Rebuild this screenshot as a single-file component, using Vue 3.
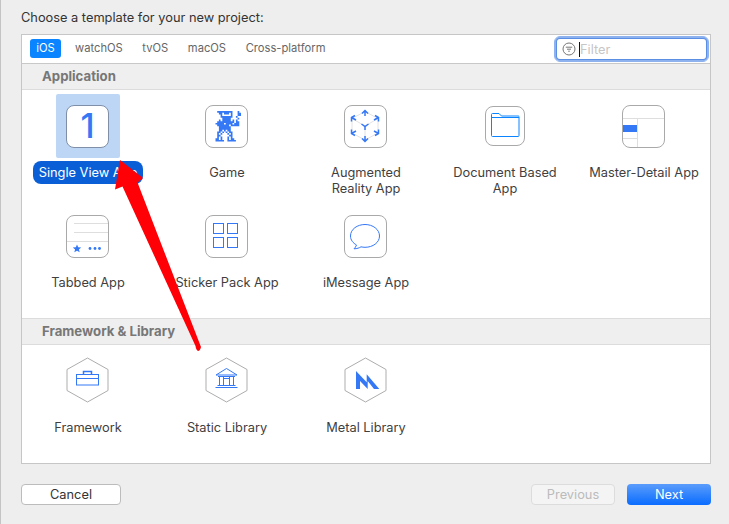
<script setup>
const tabs = ['watchOS', 'tvOS', 'macOS', 'Cross-platform']

const appItems = [
  { id: 'single', label: 'Single View App', selected: true },
  { id: 'game', label: 'Game' },
  { id: 'ar', label: 'Augmented\nReality App' },
  { id: 'doc', label: 'Document Based\nApp' },
  { id: 'master', label: 'Master-Detail App' },
  { id: 'tabbed', label: 'Tabbed App' },
  { id: 'sticker', label: 'Sticker Pack App' },
  { id: 'message', label: 'iMessage App' }
]

const libItems = [
  { id: 'framework', label: 'Framework' },
  { id: 'static', label: 'Static Library' },
  { id: 'metal', label: 'Metal Library' }
]

const sections = [
  { title: 'Application', items: appItems, cls: 'app' },
  { title: 'Framework & Library', items: libItems, cls: 'lib' }
]

const sprite = [
  '.#########...#..',
  '..##.###.#...##.',
  '...#.....#...##.',
  '...#######..#...',
  '....#####....#..',
  '..#.#####.#.#...',
  '.##########.##..',
  '#####.####.###..',
  '.#######.#####..',
  '..#######.......',
  '..#######.......',
  '..##.#.##.......',
  '.##.#.#.##......',
  '.#.#...#.#......',
  '.##.....##......',
  '.#.#...#.#......',
  '##.#...#.##.....',
  '#####..#####....'
]

const spritePath = sprite
  .map((row, y) =>
    [...row].map((c, x) => (c === '#' ? `M${x} ${y}h1v1h-1z` : '')).join('')
  )
  .join('')
</script>

<template>
  <div class="window">
    <p class="title">Choose a template for your new project:</p>

    <div class="panel">
      <div class="toolbar">
        <span class="tab active">iOS</span>
        <span v-for="t in tabs" :key="t" class="tab">{{ t }}</span>
        <div class="filter">
          <svg class="filter-icon" width="14" height="14" viewBox="0 0 14 14">
            <circle cx="7" cy="7" r="6" fill="none" stroke="#777" stroke-width="1" />
            <path d="M3.8 5.2h6.4M5 7.2h4M6.2 9.2h1.6" stroke="#777" stroke-width="1" fill="none" />
          </svg>
          <span class="caret"></span>
          <span class="placeholder">Filter</span>
        </div>
      </div>

      <section v-for="s in sections" :key="s.title" :class="['section', s.cls]">
        <h3 class="section-head">{{ s.title }}</h3>
        <div class="grid">
          <div v-for="item in s.items" :key="item.id" :class="['item', { selected: item.selected }]">
            <div class="icon-zone">
              <div v-if="item.id === 'single'" class="tile tile-sel"><span class="one">1</span></div>

              <div v-else-if="item.id === 'game'" class="tile">
                <svg width="43" height="43" viewBox="0 0 43 43">
                  <g transform="translate(10.500 6) scale(1.700)"><path :d="spritePath" fill="#3478f6" /></g>
                </svg>
              </div>

              <div v-else-if="item.id === 'ar'" class="tile">
                <svg width="43" height="43" viewBox="0 0 43 43" fill="none">
                  <path d="M21 6.500L8 13.500V28L21 35L34 28V13.500ZM21 21L8 13.500M21 21L34 13.500M21 21V35" stroke="#e2e2e2" />
                  <g stroke="#3478f6" stroke-width="1.500">
                    <path d="M21 5.500V11M18 8.500L21 5.500L24 8.500" />
                    <path d="M21 36.500V31M18 33.500L21 36.500L24 33.500" />
                    <path d="M17.500 19L21 21.500L24.500 19M21 21.500V25" />
                    <path d="M7.500 12.500L12 15M7.500 16.500V12.500L11 10.500" />
                    <path d="M34.500 12.500L30 15M34.500 16.500V12.500L31 10.500" />
                    <path d="M7.500 28.500L12 26M7.500 24.500V28.500L11 30.500" />
                    <path d="M34.500 28.500L30 26M34.500 24.500V28.500L31 30.500" />
                  </g>
                </svg>
              </div>

              <div v-else-if="item.id === 'doc'" class="tile tile-doc">
                <svg width="40" height="40" viewBox="0 0 40 40" fill="none">
                  <path d="M6.500 8.500A1 1 0 0 1 7.500 7.500H14L16.500 10H33.500A.8.8 0 0 1 34 11V29.500A1 1 0 0 1 33 30.500H7.500A1 1 0 0 1 6.500 29.500ZM6.500 11.500H34" stroke="#0a84ff" stroke-width="1" />
                </svg>
              </div>

              <div v-else-if="item.id === 'master'" class="tile">
                <svg width="43" height="43" viewBox="0 0 43 43" fill="none">
                  <path d="M0 13.500H43M15.500 14V43M0 33.500H15" stroke="#dedede" />
                  <rect x="0" y="20" width="15" height="7" fill="#3478f6" />
                </svg>
              </div>

              <div v-else-if="item.id === 'tabbed'" class="tile">
                <svg width="43" height="43" viewBox="0 0 43 43" fill="none">
                  <path d="M8 8.500H43M8 17.500H43M0 26.500H43" stroke="#dedede" />
                  <path d="M11 29.500L12.200 32.300L15.200 32.500L12.900 34.400L13.700 37.300L11 35.700L8.300 37.300L9.100 34.400L6.800 32.500L9.800 32.300Z" fill="#3478f6" />
                  <circle cx="24" cy="33.500" r="1.400" fill="#3478f6" />
                  <circle cx="29" cy="33.500" r="1.400" fill="#3478f6" />
                  <circle cx="33.500" cy="33.500" r="1.400" fill="#3478f6" />
                </svg>
              </div>

              <div v-else-if="item.id === 'sticker'" class="tile">
                <svg width="43" height="43" viewBox="0 0 43 43" fill="none" stroke="#3478f6">
                  <rect x="8.500" y="8.500" width="10" height="10" />
                  <rect x="22.500" y="8.500" width="10" height="10" />
                  <rect x="8.500" y="22.500" width="10" height="10" />
                  <rect x="22.500" y="22.500" width="10" height="10" />
                </svg>
              </div>

              <div v-else-if="item.id === 'message'" class="tile">
                <svg width="43" height="43" viewBox="0 0 43 43" fill="none">
                  <path d="M21 9.500C13.500 9.500 6.500 14 6.500 21C6.500 25 9 28 12.500 30C12 31.500 11 33 10 33.800C13 33.800 15.500 32.800 17 31.800C18.300 32.100 19.600 32.300 21 32.300C29 32.300 35.500 27.500 35.500 21C35.500 14.500 29 9.500 21 9.500Z" stroke="#3478f6" />
                </svg>
              </div>

              <svg v-else class="hex" width="43" height="46" viewBox="0 0 43 46" fill="none">
                <path d="M21.500 1L42 12.500V33.500L21.500 45L1 33.500V12.500Z" stroke="#adadad" stroke-width="1" />
                <g v-if="item.id === 'framework'" stroke="#3478f6">
                  <rect x="10.500" y="17.500" width="22" height="10.500" />
                  <path d="M10.500 21.500H32.500" />
                  <path d="M17.500 17V14.500H25.500V17" stroke-width="1.500" />
                </g>
                <g v-else-if="item.id === 'static'" stroke="#3478f6">
                  <path d="M21.500 11.500L11 18H32Z" />
                  <path d="M13 19.500H30M14.500 20V28M18.500 20V28M24.500 20V28M28.500 20V28M18.500 21.500H24.500M12.500 28.500H30.500M10.500 30.500H32.500" />
                </g>
                <path v-else d="M12 14L22.700 25.300V17.300L35.300 32H30L23.700 24V32L16 24V32H12Z" fill="#3478f6" />
              </svg>
            </div>
            <span class="label">{{ item.label }}</span>
          </div>
        </div>
      </section>
    </div>

    <div class="footer">
      <button class="btn">Cancel</button>
      <div class="footer-right">
        <button class="btn disabled">Previous</button>
        <button class="btn primary">Next</button>
      </div>
    </div>

    <svg class="arrow" width="729" height="524" viewBox="0 0 729 524">
      <path d="M120 160L143 178L137.500 182.500L201 347Q200 351 198 351Q196 350 195.500 346L122.500 186.500L115 189.500Z" fill="#fe0006" />
    </svg>
  </div>
</template>

<style>
html, body { margin: 0; background: #eeeeee; }
</style>

<style scoped>
.window {
  position: relative;
  box-sizing: border-box;
  width: 729px;
  height: 524px;
  padding: 10px 18px 0 20px;
  border-left: 1px solid #c4c4c4;
  background: #eeeeee;
  font-family: Inter, "Liberation Sans", sans-serif;
  font-size: 12.8px;
  color: #3a3a3a;
  overflow: hidden;
}
.title {
  margin: 0 0 9px;
  height: 15px;
  line-height: 15px;
  font-size: 12.8px;
  color: #333;
}
.panel {
  box-sizing: border-box;
  height: 430px;
  border: 1px solid #c6c6c6;
  background: #fff;
  display: flex;
  flex-direction: column;
}
.toolbar {
  box-sizing: border-box;
  flex: none;
  height: 29px;
  display: flex;
  align-items: flex-start;
  padding: 4px 1px 0 8px;
  border-bottom: 1px solid #c8c8c8;
}
.tab {
  margin-right: 19.6px;
  height: 19px;
  line-height: 19px;
  font-size: 11.2px;
  color: #666;
}
.tab.active {
  width: 31px;
  margin-right: 14px;
  text-align: center;
  border-radius: 3px;
  background: #0a84ff;
  color: #fff;
}
.filter {
  box-sizing: border-box;
  position: relative;
  margin: -3px 0 0 auto;
  width: 155px;
  height: 26px;
  border: 1px solid #8db2ee;
  border-radius: 6px;
  box-shadow: inset 0 0 0 1px #8db2ee, inset 0 0 0 2px #5b8fe3;
  background: #fff;
  display: flex;
  align-items: center;
  padding-left: 7px;
}
.filter-icon { flex: none; }
.caret {
  flex: none;
  width: 1px;
  height: 15px;
  margin-left: 3px;
  background: #111;
}
.placeholder {
  font-size: 12.8px;
  color: #c6c6c6;
}
.section-head {
  box-sizing: border-box;
  margin: 0;
  height: 26px;
  line-height: 25px;
  padding-left: 20px;
  font-size: 13.2px;
  font-weight: 700;
  color: #777;
  background: #efefef;
  border-bottom: 1px solid #dcdcdc;
}
.section.lib .section-head {
  height: 27px;
  border-top: 1px solid #dcdcdc;
}
.section.app { height: 254px; flex: none; }
.grid {
  display: grid;
  grid-template-columns: repeat(5, 139px);
  justify-content: center;
  grid-auto-rows: 110px;
  padding-top: 4px;
}
.section.lib .grid { padding-top: 3px; }
.section.lib .label { margin-top: 4px; }
.item {
  display: flex;
  flex-direction: column;
  align-items: center;
}
.icon-zone {
  flex: none;
  width: 64px;
  height: 64px;
  border-radius: 2px;
  display: flex;
  align-items: center;
  justify-content: center;
}
.item.selected .icon-zone { background: #bdd6f5; }
.tile {
  box-sizing: border-box;
  position: relative;
  width: 43px;
  height: 43px;
  margin-right: 1px;
  border: 1px solid #a9a9a9;
  border-radius: 8px;
  background: #fff;
  overflow: hidden;
}
.tile svg { position: absolute; left: -1px; top: -1px; }
.tile-sel {
  border-color: #7f8fa8;
  display: flex;
  align-items: center;
  justify-content: center;
}
.one {
  font-size: 34px;
  font-weight: 500;
  line-height: 1;
  color: #3478f6;
}
.tile-doc { width: 40px; height: 40px; margin-right: 0; }
.hex { flex: none; margin-right: 1px; }
.label {
  margin-top: 3px;
  padding: 3.5px 6px;
  line-height: 16px;
  font-size: 12.8px;
  text-align: center;
  white-space: pre-line;
  color: #3f3f3f;
}
.item.selected .label {
  border-radius: 8px;
  background: #0a5fd6;
  color: #fff;
}
.footer {
  margin-top: 20px;
  display: flex;
  justify-content: space-between;
}
.footer-right { display: flex; gap: 12px; }
.btn {
  box-sizing: border-box;
  width: 100px;
  height: 21px;
  padding: 0;
  border: 1px solid #bcbcbc;
  border-radius: 4px;
  background: #fff;
  font-family: inherit;
  font-size: 12.8px;
  color: #333;
}
.btn.disabled {
  width: 84px;
  background: #f4f4f4;
  border-color: #dcdcdc;
  color: #bbb;
}
.btn.primary {
  width: 84px;
  border: none;
  background: linear-gradient(#5a9cfb, #0a6cff);
  color: #fff;
}
.arrow {
  position: absolute;
  left: -1px;
  top: 0;
  pointer-events: none;
}
</style>
